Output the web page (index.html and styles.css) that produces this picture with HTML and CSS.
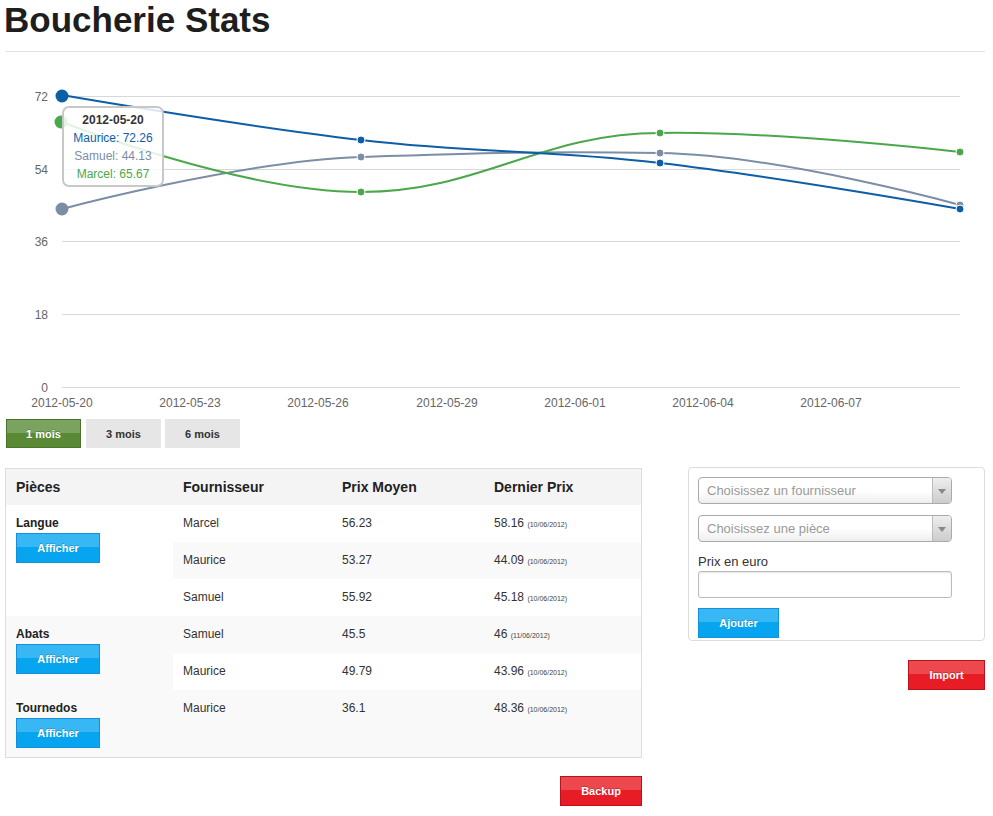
FILE: index.html
```html
<!DOCTYPE html>
<html lang="fr">
<head>
<meta charset="utf-8">
<title>Boucherie Stats</title>
<link rel="stylesheet" href="styles.css">
</head>
<body>
<div class="page">
  <div class="title-wrap"><h1>Boucherie Stats</h1></div>

  <svg class="chart" width="979" height="362" viewBox="0 0 979 362" xmlns="http://www.w3.org/2000/svg">
    <g transform="translate(-6,-52)">
      <g class="grid" stroke="#d8d8d8" stroke-width="1">
        <line x1="62" y1="96.5" x2="960" y2="96.5"/>
        <line x1="62" y1="169.5" x2="960" y2="169.5"/>
        <line x1="62" y1="241.5" x2="960" y2="241.5"/>
        <line x1="62" y1="314.5" x2="960" y2="314.5"/>
        <line x1="62" y1="387.5" x2="960" y2="387.5"/>
      </g>
      <g class="ylab" font-size="12" fill="#666" text-anchor="end">
        <text x="48" y="101">72</text>
        <text x="48" y="174">54</text>
        <text x="48" y="246">36</text>
        <text x="48" y="319">18</text>
        <text x="48" y="392">0</text>
      </g>
      <g class="xlab" font-size="12" fill="#666" text-anchor="middle">
        <text x="62" y="407">2012-05-20</text>
        <text x="190" y="407">2012-05-23</text>
        <text x="318" y="407">2012-05-26</text>
        <text x="447" y="407">2012-05-29</text>
        <text x="575" y="407">2012-06-01</text>
        <text x="703" y="407">2012-06-04</text>
        <text x="831" y="407">2012-06-07</text>
      </g>
      <path d="M62,209 C62,209 241,161 361,157 C481,153 540,151 660,153 C780,155 960,205 960,205" fill="none" stroke="#7b8ea5" stroke-width="2"/>
      <path d="M62,122 C62,122 241,192 361,192 C481,192 540,133 660,133 C780,131 960,152 960,152" fill="none" stroke="#4aa84a" stroke-width="2"/>
      <path d="M62,95 C62,95 241,126 361,140 C481,154 540,149 660,163 C780,177 960,209 960,209" fill="none" stroke="#0d5ea6" stroke-width="2"/>
      <g stroke="#fff" stroke-width="1">
        <circle cx="361" cy="157" r="4" fill="#7b8ea5"/>
        <circle cx="660" cy="153" r="4" fill="#7b8ea5"/>
        <circle cx="960" cy="205" r="4" fill="#7b8ea5"/>
        <circle cx="361" cy="192" r="4" fill="#4aa84a"/>
        <circle cx="660" cy="133" r="4" fill="#4aa84a"/>
        <circle cx="960" cy="152" r="4" fill="#4aa84a"/>
        <circle cx="361" cy="140" r="4" fill="#0d5ea6"/>
        <circle cx="660" cy="163" r="4" fill="#0d5ea6"/>
        <circle cx="960" cy="209" r="4" fill="#0d5ea6"/>
      </g>
      <circle cx="62" cy="209" r="6.5" fill="#7b8ea5"/>
      <circle cx="61" cy="122" r="6.5" fill="#4aa84a"/>
      <circle cx="62" cy="96" r="6.5" fill="#0d5ea6"/>
      <g class="tooltip">
        <rect x="63" y="107" width="100" height="79" rx="6" ry="6" fill="rgba(255,255,255,0.85)" stroke="#c8c8c8" stroke-width="2"/>
        <text x="113" y="124" text-anchor="middle" font-size="12" font-weight="bold" fill="#333">2012-05-20</text>
        <text x="113" y="142" text-anchor="middle" font-size="12" fill="#0d5ea6">Maurice: 72.26</text>
        <text x="113" y="160" text-anchor="middle" font-size="12" fill="#7b8ea5">Samuel: 44.13</text>
        <text x="113" y="178" text-anchor="middle" font-size="12" fill="#4aa84a">Marcel: 65.67</text>
      </g>
    </g>
  </svg>

  <div class="ranges">
    <button class="btn btn-green">1 mois</button>
    <button class="btn btn-grey">3 mois</button>
    <button class="btn btn-grey">6 mois</button>
  </div>

  <div class="main">
    <div class="left">
      <div class="table-box">
        <table class="stats">
          <colgroup>
            <col class="c1"><col class="c2"><col class="c3"><col class="c4">
          </colgroup>
          <thead>
            <tr><th>Pièces</th><th>Fournisseur</th><th>Prix Moyen</th><th>Dernier Prix</th></tr>
          </thead>
          <tbody>
            <tr>
              <td rowspan="3" class="piece"><strong>Langue</strong><button class="btn btn-blue">Afficher</button></td>
              <td>Marcel</td><td>56.23</td><td>58.16 <small>(10/06/2012)</small></td>
            </tr>
            <tr class="alt"><td>Maurice</td><td>53.27</td><td>44.09 <small>(10/06/2012)</small></td></tr>
            <tr><td>Samuel</td><td>55.92</td><td>45.18 <small>(10/06/2012)</small></td></tr>
            <tr class="alt">
              <td rowspan="2" class="piece"><strong>Abats</strong><button class="btn btn-blue">Afficher</button></td>
              <td>Samuel</td><td>45.5</td><td>46 <small>(11/06/2012)</small></td>
            </tr>
            <tr><td>Maurice</td><td>49.79</td><td>43.96 <small>(10/06/2012)</small></td></tr>
            <tr class="alt">
              <td class="piece"><strong>Tournedos</strong><button class="btn btn-blue">Afficher</button></td>
              <td>Maurice</td><td>36.1</td><td>48.36 <small>(10/06/2012)</small></td>
            </tr>
          </tbody>
        </table>
      </div>
      <div class="actions"><button class="btn btn-red btn-backup">Backup</button></div>
    </div>

    <div class="right">
      <div class="form-box">
        <div class="select"><span class="ph">Choisissez un fournisseur</span><span class="arrow"></span></div>
        <div class="select second"><span class="ph">Choisissez une pièce</span><span class="arrow"></span></div>
        <label class="lbl">Prix en euro</label>
        <input class="field" type="text">
        <button class="btn btn-blue btn-add">Ajouter</button>
      </div>
      <div class="actions"><button class="btn btn-red btn-import">Import</button></div>
    </div>
  </div>
</div>
</body>
</html>
```
FILE: styles.css
```css
* { box-sizing: border-box; }
body {
  margin: 0;
  font-family: "Liberation Sans", Arial, sans-serif;
  color: #333;
  background: #fff;
}
.page {
  padding: 0 8px 0 6px;
}
.title-wrap {
  padding-bottom: 11px;
  border-bottom: 1px solid #e0e0e0;
}
h1 {
  margin: 0 0 0 -2px;
  font-size: 35px;
  line-height: 40px;
  font-weight: bold;
  color: #1e1e1e;
}
.chart {
  display: block;
  font-family: "Liberation Sans", Arial, sans-serif;
}
.ranges {
  display: flex;
  gap: 4px;
  margin-top: 5px;
}
.btn {
  font-family: "Liberation Sans", Arial, sans-serif;
  font-size: 11px;
  font-weight: bold;
  border: 1px solid transparent;
  padding: 0;
  margin: 0;
  cursor: pointer;
  display: block;
}
.btn-green {
  width: 75px;
  height: 29px;
  margin-right: 1px;
  color: #fff;
  border-color: #4a7428;
  background: linear-gradient(#79a35f 0, #79a35f 50%, #5b8a36 50%, #5b8a36 100%);
  text-shadow: 0 -1px 0 rgba(0,0,0,0.25);
}
.btn-grey {
  width: 75px;
  height: 29px;
  color: #333;
  background: #e6e6e6;
  border-color: #e6e6e6;
}
.btn-blue {
  width: 84px;
  height: 30px;
  color: #fff;
  border-color: #1690d8;
  background: linear-gradient(#37b7f3 0, #37b7f3 48%, #07a4ef 48%, #07a4ef 100%);
  text-shadow: 0 -1px 0 rgba(0,0,0,0.2);
}
.btn-red {
  height: 30px;
  color: #fff;
  border-color: #b8121a;
  background: linear-gradient(#ee484f 0, #ee484f 48%, #e81c24 48%, #e81c24 100%);
  text-shadow: 0 -1px 0 rgba(0,0,0,0.25);
}
.main {
  display: flex;
  justify-content: space-between;
  align-items: flex-start;
  margin-top: 20px;
}
.left {
  width: 637px;
  margin-left: -1px;
}
.table-box {
  border: 1px solid #ddd;
}
.stats {
  width: 100%;
  border-collapse: collapse;
  table-layout: fixed;
  font-size: 12px;
}
.c1 { width: 167px; }
.c2 { width: 159px; }
.c3 { width: 152px; }
.c4 { width: 157px; }
.stats th {
  text-align: left;
  font-size: 14px;
  line-height: 18px;
  padding: 9px 10px;
  background: #f4f4f4;
  color: #222;
  font-weight: bold;
}
.stats td {
  padding: 9px 10px;
  line-height: 19px;
  height: 37px;
  vertical-align: top;
  color: #333;
}
.stats tr.alt td {
  background: #f9f9f9;
}
.stats td.piece strong {
  display: block;
  color: #222;
}
.stats small {
  font-size: 7px;
  line-height: 0;
  color: #444;
}
.actions {
  display: flex;
  justify-content: flex-end;
}
.btn-backup {
  width: 82px;
  margin-top: 18px;
}
.right {
  width: 297px;
  margin-top: -1px;
}
.form-box {
  border: 1px solid #ddd;
  border-radius: 4px;
  padding: 9px 9px 2px 9px;
}
.select {
  width: 254px;
  height: 27px;
  border: 1px solid #aaa;
  border-radius: 4px;
  background: linear-gradient(#fff 0, #fff 50%, #eee 100%);
  display: flex;
  align-items: center;
  justify-content: space-between;
  overflow: hidden;
}
.select.second {
  margin-top: 11px;
}
.ph {
  padding-left: 8px;
  font-size: 13px;
  color: #999;
}
.arrow {
  width: 19px;
  height: 100%;
  border-left: 1px solid #bbb;
  background: linear-gradient(#eee, #ccc);
  position: relative;
}
.arrow::after {
  content: "";
  position: absolute;
  left: 5px;
  top: 11px;
  border-left: 4px solid transparent;
  border-right: 4px solid transparent;
  border-top: 5px solid #888;
}
.lbl {
  display: block;
  margin-top: 11px;
  font-size: 13px;
  line-height: 18px;
  color: #333;
}
.field {
  display: block;
  width: 254px;
  height: 27px;
  border: 1px solid #bbb;
  border-radius: 3px;
  box-shadow: inset 0 1px 2px rgba(0,0,0,0.1);
  margin: 0;
}
.btn-add {
  width: 81px;
  margin-top: 10px;
}
.btn-import {
  width: 77px;
  margin-top: 19px;
}
```
